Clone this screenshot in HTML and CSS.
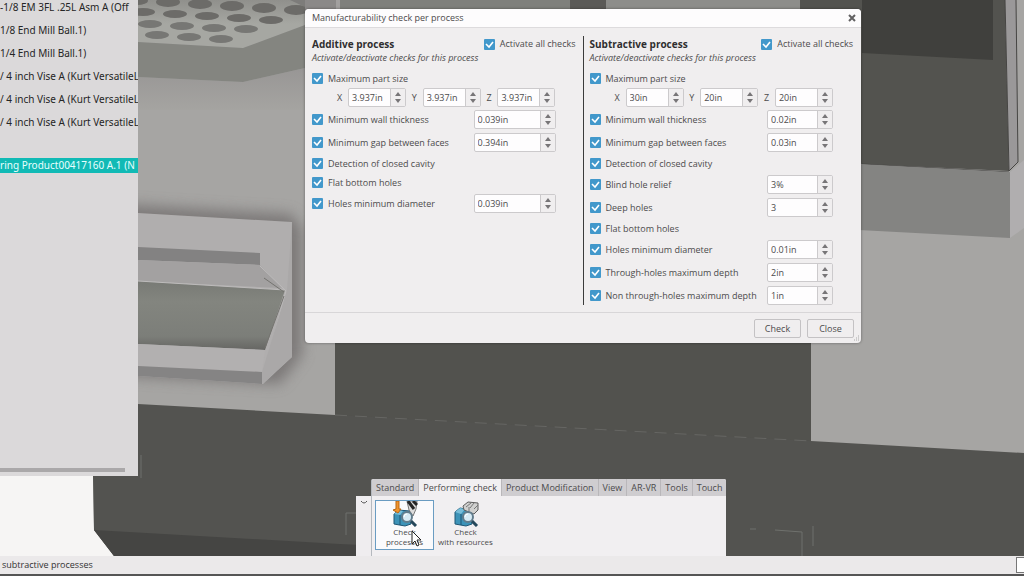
FILE: index.html
```
<!DOCTYPE html>
<html lang="en">
<head>
    <meta charset="UTF-8">
    <meta name="viewport" content="width=device-width, initial-scale=1.0">
    <title>Manufacturability check per process</title>
    <link rel="stylesheet" href="styles.css">
</head>
<body>
    <main class="workspace">
        <svg class="scene" viewBox="0 0 1024 556" preserveAspectRatio="xMinYMax slice" aria-hidden="true">
            <defs>
                <linearGradient id="recess" x1="0" y1="0" x2="0" y2="1">
                    <stop offset="0" stop-color="#787a75"/>
                    <stop offset="0.3" stop-color="#83857f"/>
                    <stop offset="0.8" stop-color="#7c7e79"/>
                    <stop offset="1" stop-color="#666663"/>
                </linearGradient>
                <linearGradient id="plate" x1="0" y1="0" x2="0" y2="1">
                    <stop offset="0" stop-color="#90908c"/>
                    <stop offset="0.5" stop-color="#a6a7a2"/>
                </linearGradient>
                <linearGradient id="under" x1="0" y1="0" x2="0" y2="1">
                    <stop offset="0" stop-color="#989695"/>
                    <stop offset="1" stop-color="#a5a4a1"/>
                </linearGradient>
                <filter id="soft" x="-20%" y="-20%" width="140%" height="140%">
                    <feGaussianBlur stdDeviation="7"/>
                </filter>
            </defs>
            <rect width="1024" height="556" fill="#a6a5a3"/>
            <!-- perforated plate -->
            <path d="M138 77 243 82 305 68V110H138z" fill="url(#under)"/>
            <path d="M138 0H305V25L243 48 138 42z" fill="url(#plate)"/>
            <path d="M168 0H290L305 7V0z" fill="#7d7c7a"/>
            <path d="M138 42 243 48 305 25V68L243 82 138 77z" fill="#848580"/>
            <g fill="#6c6b68">
                <ellipse cx="137" cy="1" rx="11" ry="4"/>
                <ellipse cx="168" cy="2" rx="12" ry="5"/>
                <ellipse cx="200" cy="4" rx="12" ry="5"/>
                <ellipse cx="232" cy="6" rx="12" ry="5"/>
                <ellipse cx="264" cy="8" rx="12" ry="5"/>
                <ellipse cx="296" cy="10" rx="12" ry="5"/>
                <ellipse cx="143" cy="12" rx="12" ry="4"/>
                <ellipse cx="175" cy="14" rx="12" ry="4"/>
                <ellipse cx="207" cy="16" rx="12" ry="4"/>
                <ellipse cx="239" cy="18" rx="12" ry="4"/>
                <ellipse cx="271" cy="20" rx="12" ry="4"/>
            </g>
            <g fill="#777774">
                <ellipse cx="150" cy="24" rx="12" ry="4"/>
                <ellipse cx="182" cy="26" rx="12" ry="4"/>
                <ellipse cx="214" cy="28" rx="12" ry="4"/>
                <ellipse cx="246" cy="29" rx="12" ry="4"/>
                <ellipse cx="157" cy="35" rx="12" ry="4"/>
                <ellipse cx="189" cy="37" rx="12" ry="4"/>
                <ellipse cx="221" cy="39" rx="12" ry="4"/>
            </g>
            <!-- handle frame -->
            <path d="M120 204 292 214 302 230V355L280 384 120 376z" fill="#6e6b6b" opacity="0.75" filter="url(#soft)"/>
            <path d="M138 213 292 222V357L263 384 138 376z" fill="#b0aeae"/>
            <path d="M138 247 260 253V265L138 260z" fill="#838282"/>
            <path d="M138 260 260 265 282 288 138 281z" fill="#a3a1a1"/>
            <path d="M138 281 285 290 265 350 138 344z" fill="url(#recess)"/>
            <path d="M138 281 285 290M260 266 286 291 264 372" fill="none" stroke="#bdbbbb"/>
            <path d="M264 278 284 292M284 296 265 348" fill="none" stroke="#74736f"/>
            <path d="M138 344 265 350 262 372 138 366z" fill="#b2b0b0"/>
            <path d="M138 366 262 372V384L138 376z" fill="#858484"/>
            <path d="M287 290 262 372V384L292 357V222z" fill="#aaa8a8"/>
            <!-- machine base -->
            <path d="M335 340H811V445H335z" fill="#52524e"/>
            <path d="M0 476H93L94 530 114 556H0z" fill="#f6f5f4"/>
            <path d="M138 404 335 415 811 441 1024 453V556H114L94 530 93 476H138z" fill="#535350"/>
            <path d="M94 530 340 544 600 556H114z" fill="#454543"/>
            <path d="M335 415 811 441" stroke="#666663" stroke-dasharray="12 8" fill="none"/>
            <path d="M141 455V478M346 535V513H356M750 529H756M775 530 802 532V556M813 526V546" stroke="#6f716d" fill="none"/>
            <!-- top strip -->
            <path d="M305 0H340V30H305z" fill="#8b8988"/>
            <path d="M336 0H340V30H336z" fill="#a2a09f"/>
            <path d="M340 0H590V30H340z" fill="#7f807c"/>
            <path d="M570 0H606V30H570z" fill="#5b5a57"/>
            <path d="M606 0H800V30H606z" fill="#8d8d8a"/>
            <!-- door and window -->
            <path d="M800 0H1005L1009 171 800 161z" fill="#53534f"/>
            <path d="M862 0H993V60L862 53z" fill="#40403d"/>
            <path d="M1005 0H1016L1018 162 1009 171z" fill="#9a9899"/>
            <path d="M1005 0 1009 171 1018 162 1016 0M862 164 1009 172" fill="none" stroke="#464543"/>
            <path d="M840 163 1010 172V238L840 229z" fill="#848482"/>
            <path d="M1010 172 1024 160V228L1010 238z" fill="#b0aeaf"/>
        </svg>

        <aside class="tree">
            <ul class="tree-list">
                <li>-1/8 EM 3FL .25L Asm A (Off</li>
                <li>1/8 End Mill Ball.1)</li>
                <li>1/4 End Mill Ball.1)</li>
                <li>/ 4 inch Vise A (Kurt VersatileL</li>
                <li>/ 4 inch Vise A (Kurt VersatileL</li>
                <li>/ 4 inch Vise A (Kurt VersatileL</li>
                <li class="selected">ring Product00417160 A.1 (N</li>
            </ul>
            <div class="tree-scroll"></div>
        </aside>

        <section class="dialog" role="dialog" aria-labelledby="dialog-title">
            <header class="dialog-title">
                <h1 id="dialog-title">Manufacturability check per process</h1>
                <button class="close" aria-label="Close window">
                    <svg viewBox="0 0 8 8"><path d="M1 1 7 7M7 1 1 7"/></svg>
                </button>
            </header>
            <div class="columns">
                <section class="process additive">
                    <div class="process-head">
                        <h2>Additive process</h2>
                        <label><input type="checkbox" checked>Activate all checks</label>
                    </div>
                    <p class="hint">Activate/deactivate checks for this process</p>
                    <div class="checks">
                        <div class="row"><label><input type="checkbox" checked>Maximum part size</label></div>
                        <div class="row axes">
                            <label for="add-x">X</label><span class="spin"><input type="text" id="add-x" value="3.937in"><span class="steps"><button aria-label="Increase"></button><button aria-label="Decrease"></button></span></span>
                            <label for="add-y">Y</label><span class="spin"><input type="text" id="add-y" value="3.937in"><span class="steps"><button aria-label="Increase"></button><button aria-label="Decrease"></button></span></span>
                            <label for="add-z">Z</label><span class="spin"><input type="text" id="add-z" value="3.937in"><span class="steps"><button aria-label="Increase"></button><button aria-label="Decrease"></button></span></span>
                        </div>
                        <div class="row">
                            <label><input type="checkbox" checked>Minimum wall thickness</label>
                            <span class="spin"><input type="text" aria-label="Minimum wall thickness" value="0.039in"><span class="steps"><button aria-label="Increase"></button><button aria-label="Decrease"></button></span></span>
                        </div>
                        <div class="row">
                            <label><input type="checkbox" checked>Minimum gap between faces</label>
                            <span class="spin"><input type="text" aria-label="Minimum gap between faces" value="0.394in"><span class="steps"><button aria-label="Increase"></button><button aria-label="Decrease"></button></span></span>
                        </div>
                        <div class="row"><label><input type="checkbox" checked>Detection of closed cavity</label></div>
                        <div class="row"><label><input type="checkbox" checked>Flat bottom holes</label></div>
                        <div class="row">
                            <label><input type="checkbox" checked>Holes minimum diameter</label>
                            <span class="spin"><input type="text" aria-label="Holes minimum diameter" value="0.039in"><span class="steps"><button aria-label="Increase"></button><button aria-label="Decrease"></button></span></span>
                        </div>
                    </div>
                </section>

                <section class="process subtractive">
                    <div class="process-head">
                        <h2>Subtractive process</h2>
                        <label><input type="checkbox" checked>Activate all checks</label>
                    </div>
                    <p class="hint">Activate/deactivate checks for this process</p>
                    <div class="checks">
                        <div class="row"><label><input type="checkbox" checked>Maximum part size</label></div>
                        <div class="row axes">
                            <label for="sub-x">X</label><span class="spin"><input type="text" id="sub-x" value="30in"><span class="steps"><button aria-label="Increase"></button><button aria-label="Decrease"></button></span></span>
                            <label for="sub-y">Y</label><span class="spin"><input type="text" id="sub-y" value="20in"><span class="steps"><button aria-label="Increase"></button><button aria-label="Decrease"></button></span></span>
                            <label for="sub-z">Z</label><span class="spin"><input type="text" id="sub-z" value="20in"><span class="steps"><button aria-label="Increase"></button><button aria-label="Decrease"></button></span></span>
                        </div>
                        <div class="row">
                            <label><input type="checkbox" checked>Minimum wall thickness</label>
                            <span class="spin"><input type="text" aria-label="Minimum wall thickness" value="0.02in"><span class="steps"><button aria-label="Increase"></button><button aria-label="Decrease"></button></span></span>
                        </div>
                        <div class="row">
                            <label><input type="checkbox" checked>Minimum gap between faces</label>
                            <span class="spin"><input type="text" aria-label="Minimum gap between faces" value="0.03in"><span class="steps"><button aria-label="Increase"></button><button aria-label="Decrease"></button></span></span>
                        </div>
                        <div class="row"><label><input type="checkbox" checked>Detection of closed cavity</label></div>
                        <div class="row">
                            <label><input type="checkbox" checked>Blind hole relief</label>
                            <span class="spin"><input type="text" aria-label="Blind hole relief" value="3%"><span class="steps"><button aria-label="Increase"></button><button aria-label="Decrease"></button></span></span>
                        </div>
                        <div class="row">
                            <label><input type="checkbox" checked>Deep holes</label>
                            <span class="spin"><input type="text" aria-label="Deep holes" value="3"><span class="steps"><button aria-label="Increase"></button><button aria-label="Decrease"></button></span></span>
                        </div>
                        <div class="row"><label><input type="checkbox" checked>Flat bottom holes</label></div>
                        <div class="row">
                            <label><input type="checkbox" checked>Holes minimum diameter</label>
                            <span class="spin"><input type="text" aria-label="Holes minimum diameter" value="0.01in"><span class="steps"><button aria-label="Increase"></button><button aria-label="Decrease"></button></span></span>
                        </div>
                        <div class="row">
                            <label><input type="checkbox" checked>Through-holes maximum depth</label>
                            <span class="spin"><input type="text" aria-label="Through-holes maximum depth" value="2in"><span class="steps"><button aria-label="Increase"></button><button aria-label="Decrease"></button></span></span>
                        </div>
                        <div class="row">
                            <label><input type="checkbox" checked>Non through-holes maximum depth</label>
                            <span class="spin"><input type="text" aria-label="Non through-holes maximum depth" value="1in"><span class="steps"><button aria-label="Increase"></button><button aria-label="Decrease"></button></span></span>
                        </div>
                    </div>
                </section>
            </div>
            <footer class="dialog-footer">
                <button class="action">Check</button>
                <button class="action">Close</button>
            </footer>
            <svg class="grip" viewBox="0 0 6 6" aria-hidden="true"><path d="M1 5H2M3 5H4M5 5H6M3 3H4M5 3H6M5 1H6"/></svg>
        </section>

        <section class="action-bar">
            <button class="collapse" aria-label="Collapse">
                <svg viewBox="0 0 8 5"><path d="M1 1Q4 5 7 1"/></svg>
            </button>
            <div class="bar-main">
                <nav class="tabs">
                    <button>Standard</button>
                    <button class="active">Performing check</button>
                    <button>Product Modification</button>
                    <button>View</button>
                    <button>AR-VR</button>
                    <button>Tools</button>
                    <button>Touch</button>
                </nav>
                <div class="commands">
                    <button class="command current">
                        <svg viewBox="0 0 26 26">
                            <path d="M2 13 6 9 18 10 19 23 13 25 2 23z" fill="#3d93b8" stroke="#1f5674"/>
                            <path d="M2 13 6 9 11 10 8 14z" fill="#78bdd8"/>
                            <path d="M8 14V24" stroke="#1f5674"/>
                            <path d="M4 0H7V8H9L6 12 1 9 4 8z" fill="#f0942c" stroke="#b96713"/>
                            <path d="M15 0H25L24 8 21 15 17 9z" fill="#dcdcdc" stroke="#777"/>
                            <path d="M16 0 22 8M21 0 25 4" stroke="#252525" stroke-width="3"/>
                            <path d="M18 19 24 25" stroke="#26485b" stroke-width="3"/>
                            <circle cx="15" cy="16" r="5" fill="#d5eaf4" stroke="#627c8c" stroke-width="2"/>
                            <path d="M12 16Q12 13 15 13" stroke="#fff" fill="none"/>
                        </svg>
                        <span>Check<br>processes</span>
                    </button>
                    <button class="command">
                        <svg viewBox="0 0 26 26">
                            <path d="M2 11 7 7 18 9 19 23 13 25 2 23z" fill="#3d93b8" stroke="#1f5674"/>
                            <path d="M2 11 7 7 12 8 8 13z" fill="#78bdd8"/>
                            <path d="M8 13V24" stroke="#1f5674"/>
                            <path d="M10 5 15 1 25 2V9L21 13 11 9z" fill="#d0d0cf" stroke="#5c5c5c"/>
                            <path d="M13 6 18 2M17 7 21 2M21 8 25 4M16 6V10" fill="none" stroke="#777"/>
                            <path d="M18 19 24 25" stroke="#26485b" stroke-width="3"/>
                            <circle cx="15" cy="16" r="5" fill="#d5eaf4" stroke="#627c8c" stroke-width="2"/>
                            <path d="M12 16Q12 13 15 13" stroke="#fff" fill="none"/>
                        </svg>
                        <span>Check<br>with resources</span>
                    </button>
                </div>
            </div>
        </section>

        <svg class="cursor" viewBox="0 0 11 18" aria-hidden="true"><path d="M1 1V14L4 11 6 16 8 15 6 10H10z"/></svg>
    </main>

    <footer class="status">
        <span>subtractive processes</span>
        <input class="power-input" type="text" aria-label="Power input">
    </footer>
</body>
</html>
```
FILE: styles.css
```
* {
    box-sizing: border-box;
}
body {
    font-family: "Open Sans", "Noto Sans", sans-serif;
    font-size: 9px;
    line-height: 12px;
    color: #4c4b4c;
    margin: 0;
    height: 100vh;
    display: flex;
    flex-direction: column;
    background-color: #555;
    overflow: hidden;
}
h1, h2, p, ul {
    margin: 0;
    padding: 0;
}
button, input {
    font: inherit;
    color: inherit;
    margin: 0;
    padding: 0;
}
button {
    border: none;
    background: none;
}
.workspace {
    flex: 1;
    position: relative;
    min-height: 0;
    overflow: hidden;
}
.scene {
    display: block;
    width: 100%;
    height: 100%;
}

/* specification tree */
.tree {
    position: absolute;
    left: 0;
    top: 0;
    width: 138px;
    height: 476px;
    display: flex;
    flex-direction: column;
    justify-content: space-between;
    background-color: #dbd9da;
    color: #252525;
    overflow: hidden;
}
.tree-list {
    list-style: none;
    display: flex;
    flex-direction: column;
    gap: 10px;
    padding-top: 1px;
    font-family: "Noto Sans", sans-serif;
    font-size: 10px;
    line-height: 13px;
    white-space: nowrap;
}
.tree-list .selected {
    margin-top: 19px;
    line-height: 15px;
    background-color: #11bab5;
    color: #e8ffff;
}
.tree-scroll {
    height: 4px;
    margin: 0 13px 4px 0;
    background-color: #aaa8a9;
}

/* dialog */
.dialog {
    position: absolute;
    left: 305px;
    top: 9px;
    width: 556px;
    background-color: #f0eeef;
    border-radius: 4px;
    box-shadow: 0 0 3px rgba(0, 0, 0, 0.4);
}
.dialog-title {
    display: flex;
    justify-content: space-between;
    align-items: center;
    height: 19px;
    padding: 0 5px 0 7px;
    background-color: #fdfcfd;
    border-bottom: 1px solid #dddbdd;
    border-radius: 4px 4px 0 0;
}
.dialog-title h1 {
    font-size: 9px;
    font-weight: normal;
}
.close {
    display: flex;
}
.close svg {
    width: 8px;
    height: 8px;
    fill: none;
    stroke: #626162;
    stroke-width: 2;
}
.columns {
    display: grid;
    grid-template-columns: 1fr 1fr;
    padding: 8px 8px 7px 7px;
}
.process {
    padding-right: 7px;
}
.subtractive {
    border-left: 1px solid #3b3b3b;
    padding: 0 0 0 6px;
}
.process-head {
    display: flex;
    justify-content: space-between;
    align-items: center;
    height: 16px;
}
.process h2 {
    font-size: 10px;
    color: #2f2e2f;
}
.hint {
    font-style: italic;
    height: 13px;
}
label {
    display: flex;
    align-items: center;
    gap: 5px;
    white-space: nowrap;
}
input[type="checkbox"] {
    appearance: none;
    flex: none;
    width: 11px;
    height: 11px;
    border-radius: 1px;
    background: #4298cb url("data:image/svg+xml,%3Csvg xmlns='http://www.w3.org/2000/svg' viewBox='0 0 11 11'%3E%3Cpath d='M2 5 5 8 9 3' fill='none' stroke='white' stroke-width='1.6'/%3E%3C/svg%3E");
}
.checks {
    display: flex;
    flex-direction: column;
    gap: 4px;
    padding: 6px 20px 0 0;
}
.row {
    display: flex;
    justify-content: space-between;
    align-items: center;
    min-height: 15px;
}
.row:first-child {
    margin-bottom: -2px;
}
.row:nth-child(3) {
    margin-top: -1px;
}
.axes {
    padding-left: 25px;
}
.spin {
    display: flex;
    width: 66px;
    height: 19px;
    background-color: #fefdfe;
    border: 1px solid #cccacc;
    border-radius: 2px;
}
.additive .spin {
    width: 82px;
}
.process .axes .spin {
    width: 58px;
}
.spin input {
    flex: 1;
    min-width: 0;
    padding-left: 3px;
    border: none;
    background: none;
}
.steps {
    display: flex;
    flex-direction: column;
    justify-content: space-evenly;
    align-items: center;
    width: 15px;
    background-color: #f0eeef;
    border-left: 1px solid #cccacc;
}
.steps button {
    border: 3px solid transparent;
    border-top: none;
    border-bottom: 4px solid #777577;
}
.steps button + button {
    border-bottom: none;
    border-top: 4px solid #777577;
}
.dialog-footer {
    display: flex;
    justify-content: flex-end;
    gap: 6px;
    padding: 6px 7px 5px;
    border-top: 1px solid #d8d6d8;
}
.action {
    min-width: 47px;
    height: 19px;
    border: 1px solid #c4c2c4;
    border-radius: 2px;
}
.grip {
    position: absolute;
    right: 2px;
    bottom: 2px;
    width: 6px;
    height: 6px;
    stroke: #aaa;
}

/* action bar */
.action-bar {
    position: absolute;
    left: 356px;
    bottom: 0;
    display: flex;
    align-items: flex-end;
}
.collapse {
    width: 15px;
    height: 60px;
    padding-top: 4px;
    display: flex;
    justify-content: center;
    align-items: flex-start;
    background-color: #efedef;
}
.collapse svg {
    width: 8px;
    height: 5px;
    fill: none;
    stroke: #555;
}
.bar-main {
    border-left: 1px solid #b5b9bf;
    background-color: #f1eff1;
    border-radius: 2px 2px 0 0;
}
.tabs {
    display: flex;
    height: 17px;
    background-color: #cfcdd0;
    border-radius: 2px 2px 0 0;
}
.tabs button {
    padding: 0 4px;
    border-right: 1px solid #b9b7ba;
    white-space: nowrap;
}
.tabs button:last-child {
    border-right: none;
}
.tabs .active {
    background-color: #f1eff1;
}
.commands {
    display: flex;
    gap: 2px;
    height: 60px;
    padding: 4px 3px;
}
.command {
    display: flex;
    flex-direction: column;
    align-items: center;
    width: 59px;
    height: 50px;
    border: 1px solid transparent;
    font-size: 8px;
    line-height: 10px;
    white-space: nowrap;
}
.command.current {
    border-color: #6a9cc2;
    background-color: #fafafc;
}
.command svg {
    width: 26px;
    height: 26px;
}
.cursor {
    position: absolute;
    left: 411px;
    top: 530px;
    width: 11px;
    height: 18px;
    fill: #fff;
    stroke: #222;
}

/* status bar */
.status {
    display: flex;
    justify-content: space-between;
    align-items: center;
    height: 18px;
    margin-bottom: 2px;
    padding-left: 2px;
    background-color: #ebe9ea;
    color: #333;
}
.power-input {
    width: 8px;
    height: 16px;
    border: 1px solid #777;
    border-right: none;
    background-color: #fff;
}
```
